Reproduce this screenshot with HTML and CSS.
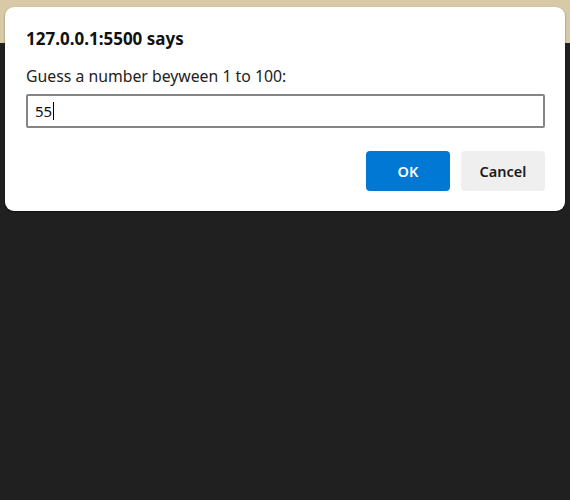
FILE: index.html
```html
<!DOCTYPE html>
<html>
<head>
<meta charset="utf-8">
<link rel="stylesheet" href="styles.css">
</head>
<body>
<div class="page">
  <div class="topband"></div>
  <div class="rest"></div>
</div>
<div class="dialog">
  <div class="title">127.0.0.1:5500 says</div>
  <div class="message">Guess a number beyween 1 to 100:</div>
  <div class="field"><span class="val">55</span><span class="caret"></span></div>
  <div class="actions">
    <button class="btn ok">OK</button>
    <button class="btn cancel">Cancel</button>
  </div>
</div>
</body>
</html>
```
FILE: styles.css
```css
html, body {
  margin: 0;
  padding: 0;
  width: 570px;
  height: 500px;
  overflow: hidden;
  font-family: "Noto Sans", "Open Sans", sans-serif;
}
.page {
  display: flex;
  flex-direction: column;
  height: 500px;
}
.topband {
  height: 43px;
  background: #d9caa7;
}
.rest {
  flex: 1;
  background: #202020;
}
.dialog {
  position: absolute;
  left: 5px;
  top: 7px;
  width: 560px;
  height: 204px;
  box-sizing: border-box;
  background: #fff;
  border-radius: 9px;
  box-shadow: 0 1px 2px rgba(0,0,0,0.5);
  padding: 21px 20px 0 21px;
}
.title {
  font-size: 17px;
  font-weight: 700;
  color: #111;
  line-height: 22px;
}
.message {
  margin-top: 15px;
  font-size: 15.8px;
  color: #222;
  line-height: 22px;
}
.field {
  margin-top: 7px;
  height: 34px;
  box-sizing: border-box;
  border: 2px solid #858585;
  border-radius: 2px;
  display: flex;
  align-items: center;
  padding-left: 7px;
  font-size: 15px;
  color: #111;
}
.caret {
  width: 1px;
  height: 18px;
  background: #000;
  margin-left: 1px;
}
.actions {
  margin-top: 23px;
  display: flex;
  justify-content: flex-end;
  gap: 11px;
}
.btn {
  width: 84px;
  height: 40px;
  border: none;
  border-radius: 4px;
  font-family: "Noto Sans", "Open Sans", sans-serif;
  font-size: 14.5px;
  font-weight: 600;
}
.ok {
  background: #0078d4;
  color: #fff;
}
.cancel {
  background: #efefef;
  color: #1a1a1a;
}
```
